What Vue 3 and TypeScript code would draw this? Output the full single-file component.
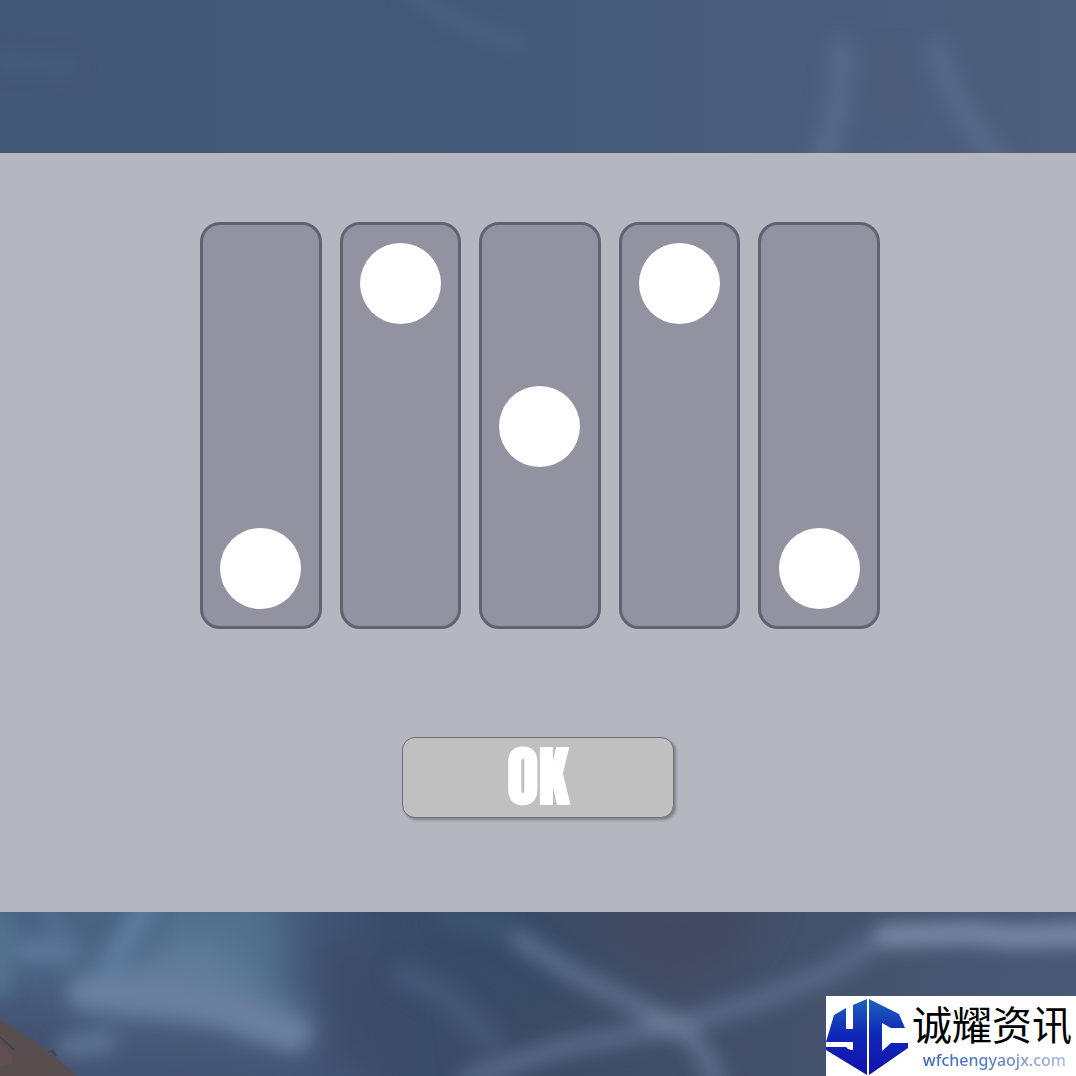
<script setup lang="ts">
import { ref } from 'vue'

interface Slot {
  id: number
  position: number
}

const slots = ref<Slot[]>([
  { id: 1, position: 0 },
  { id: 2, position: 2 },
  { id: 3, position: 1 },
  { id: 4, position: 2 },
  { id: 5, position: 0 },
])
</script>

<template>
  <main class="page">
    <svg class="scene" viewBox="0 0 1076 1076" preserveAspectRatio="xMidYMid slice" aria-hidden="true">
      <defs>
        <linearGradient id="sky" x1="0" x2="1" y1="0" y2="0">
          <stop offset="0" stop-color="#425675" />
          <stop offset="0.5" stop-color="#455a7a" />
          <stop offset="1" stop-color="#4f5f7e" />
        </linearGradient>
        <linearGradient id="ground" x1="0" x2="1" y1="0" y2="0">
          <stop offset="0" stop-color="#4b6485" />
          <stop offset="0.22" stop-color="#4a6482" />
          <stop offset="0.36" stop-color="#3b4c6b" />
          <stop offset="0.5" stop-color="#3c4b65" />
          <stop offset="0.65" stop-color="#434f69" />
          <stop offset="1" stop-color="#495876" />
        </linearGradient>
        <filter id="soft" x="-50%" y="-50%" width="200%" height="200%" color-interpolation-filters="sRGB">
          <feGaussianBlur stdDeviation="9" />
        </filter>
        <filter id="wide" x="-50%" y="-50%" width="200%" height="200%" color-interpolation-filters="sRGB">
          <feGaussianBlur stdDeviation="18" />
        </filter>
      </defs>
      <rect width="1076" height="540" fill="url(#sky)" />
      <g filter="url(#soft)" fill="none" stroke-linecap="round">
        <path d="M0 60 L70 68" stroke="#475d7e" stroke-width="16" />
        <path d="M410 -10 Q455 28 520 44" stroke="#4c6284" stroke-width="12" />
        <path d="M842 50 Q845 90 822 165" stroke="#546888" stroke-width="28" />
        <path d="M938 50 Q950 100 1000 165" stroke="#566887" stroke-width="24" />
        <path d="M890 60 L892 110" stroke="#4d5b7a" stroke-width="24" />
      </g>
      <rect y="540" width="1076" height="536" fill="url(#ground)" />
      <g filter="url(#wide)">
        <path d="M-30 1000 L40 994 L110 1040 L330 1046 L390 1100 L-30 1100Z" fill="#445373" />
        <path d="M170 890 L275 890 L285 975 L220 985 L150 960Z" fill="#52708e" />
        <path d="M320 940 L380 960 L400 1080 L340 1060Z" fill="#3e4a69" />
        <path d="M420 905 L520 905 L600 970 L520 1000 L440 960Z" fill="#374b68" />
        <path d="M590 900 L770 900 L730 960 L650 975Z" fill="#42495f" />
        <path d="M90 975 L200 935 L310 1020 L300 1045 L230 1025 L90 1005Z" fill="#627d9c" />
      </g>
      <g filter="url(#soft)" fill="none" stroke-linecap="round" stroke-linejoin="round">
        <path d="M0 918 L0 985" stroke="#557391" stroke-width="20" />
        <path d="M25 950 L68 952" stroke="#5d7797" stroke-width="24" />
        <path d="M48 905 L62 940" stroke="#526f90" stroke-width="14" />
        <path d="M145 908 L112 965" stroke="#5c7c9c" stroke-width="26" />
        <path d="M85 992 Q190 994 228 1010 T294 1034" stroke="#6b80a0" stroke-width="32" />
        <path d="M70 1046 L105 1042" stroke="#5b7291" stroke-width="24" />
        <path d="M130 1040 L225 1046" stroke="#485675" stroke-width="14" />
        <path d="M405 975 L445 995 L490 1040" stroke="#465676" stroke-width="28" />
        <path d="M450 915 L510 930" stroke="#3c546f" stroke-width="26" />
        <path d="M520 940 L570 972 L670 1023 Q705 1040 717 1085" stroke="#5b6b88" stroke-width="20" />
        <path d="M470 1078 L560 1048 L680 1025 L760 1000 L830 972 L872 944" stroke="#586887" stroke-width="20" />
        <path d="M655 1020 L685 1028" stroke="#6a7a96" stroke-width="22" />
        <path d="M885 936 L970 933 L1015 937 L1096 934" stroke="#7b8aa6" stroke-width="22" />
      </g>
      <path d="M0 1020 Q46 1046 77 1076 H0Z" fill="#584e50" />
      <path d="M0 1042 Q13 1052 12 1064 L0 1067Z" fill="#624f54" />
      <path d="M0 1037 L14 1050 M50 1051 l4 2 m-2 -3 l4 6" stroke="#454450" stroke-width="2" fill="none" />
    </svg>

    <section class="panel" aria-label="Slot puzzle">
      <div class="slots">
        <input
          v-for="slot in slots"
          :key="slot.id"
          v-model.number="slot.position"
          class="slot"
          type="range"
          min="0"
          max="2"
          step="1"
          :aria-label="`Slot ${slot.id}`"
        />
      </div>
      <button class="confirm" type="button">OK</button>
    </section>

    <a class="brand" href="#">
      <svg class="brand-mark" viewBox="0 0 84 80" aria-hidden="true">
        <defs>
          <linearGradient id="mark" x1="0" x2="0" y1="0" y2="1">
            <stop offset="0" stop-color="#1b63bd" />
            <stop offset="0.45" stop-color="#1028b8" />
            <stop offset="1" stop-color="#1111ad" />
          </linearGradient>
        </defs>
        <path
          fill="url(#mark)"
          d="M41 3 V79 L0 54 V51 H20 Q22 54 27 54 V46 H0 L8 19 L20 12 V33 H27 V9Z"
        />
        <path
          fill="url(#mark)"
          d="M43 3 L73 18 L79 32 H65 L56 27 V55 L65 47 H82 V52 L43 79Z"
        />
      </svg>
      <span class="brand-text">
        <span class="brand-name">诚耀资讯</span>
        <span class="brand-url">wfchengyaojx.com</span>
      </span>
    </a>
  </main>
</template>

<style>
body {
  margin: 0;
}
</style>

<style scoped>
.page {
  position: relative;
  box-sizing: border-box;
  min-height: 100vh;
  padding: 153px 0 164px;
  overflow: hidden;
  background: #455a7a;
}

.scene {
  position: absolute;
  inset: 0;
  width: 100%;
  height: 100%;
}

.panel {
  position: relative;
  display: flex;
  flex-direction: column;
  align-items: center;
  gap: 108px;
  padding: 69px 24px 94px;
  background: #b6b6c0;
}

.slots {
  display: grid;
  box-sizing: border-box;
  grid-template-columns: repeat(5, 1fr);
  gap: 18px;
  width: 100%;
  max-width: 684px;
  padding-left: 4px;
}

.slot {
  appearance: none;
  box-sizing: border-box;
  width: 100%;
  height: 407px;
  margin: 0;
  padding: 18px 17px 17px;
  border: 3px solid #636172;
  border-radius: 20px;
  background: #9392a0;
  writing-mode: vertical-lr;
  direction: rtl;
  cursor: pointer;
}

.slot::-webkit-slider-thumb {
  appearance: none;
  width: 81px;
  height: 81px;
  border: 0;
  border-radius: 50%;
  background: #fff;
}

.confirm {
  width: 272px;
  height: 81px;
  padding: 0;
  border: 1px solid #6f6f75;
  border-radius: 13px;
  background: #c0c0c0;
  box-shadow: 2px 2px 3px rgba(60, 60, 70, 0.45);
  color: #fff;
  font-family: Impact, Anton, "Liberation Sans Narrow", sans-serif;
  font-size: 64px;
  font-weight: 700;
  line-height: 79px;
  cursor: pointer;
}

.brand {
  position: absolute;
  right: 0;
  bottom: 0;
  display: flex;
  width: 250px;
  height: 80px;
  background: #fff;
  text-decoration: none;
}

.brand-mark {
  flex: none;
  width: 84px;
  height: 80px;
}

.brand-text {
  display: flex;
  flex-direction: column;
  padding-top: 6px;
  padding-left: 2px;
}

.brand-name {
  color: #000;
  font-family: "Liberation Sans", "Noto Sans CJK SC", sans-serif;
  font-size: 40px;
  line-height: 48px;
  white-space: nowrap;
}

.brand-url {
  align-self: flex-end;
  padding-right: 6px;
  background: linear-gradient(90deg, #3565bc, #5c82c6 50%, #b4c2d8);
  background-clip: text;
  color: transparent;
  font-family: "Noto Sans", sans-serif;
  font-size: 16px;
  font-weight: 500;
  line-height: 20px;
}
</style>
